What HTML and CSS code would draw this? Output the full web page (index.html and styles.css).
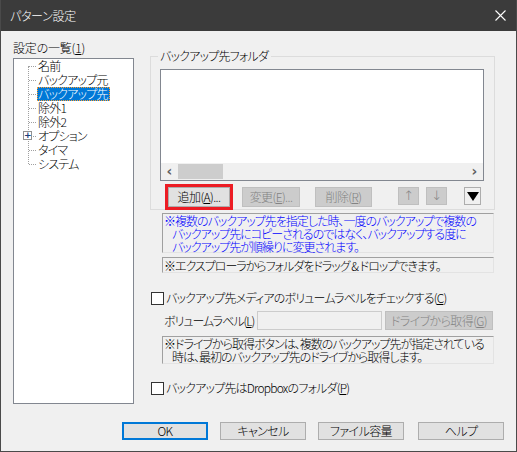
FILE: index.html
```html
<!DOCTYPE html>
<html lang="ja">
<head>
<meta charset="utf-8">
<title>パターン設定</title>
<link rel="stylesheet" href="styles.css">
</head>
<body>
<div class="window">
  <div class="titlebar">
    <span class="title">パターン設定</span>
    <svg class="close" width="11" height="11" viewBox="0 0 11 11"><path d="M0.5 0.5 L10.5 10.5 M10.5 0.5 L0.5 10.5" stroke="#ffffff" stroke-width="1.1" fill="none"/></svg>
  </div>
  <div class="body">
    <div class="main">
      <div class="left">
        <div class="lbl">設定の一覧(<u>1</u>)</div>
        <div class="tree">
          <ul class="nodes">
            <li>名前</li>
            <li>バックアップ元</li>
            <li><span class="sel">バックアップ先</span></li>
            <li>除外1</li>
            <li>除外2</li>
            <li class="has-kids"><span class="plus">+</span>オプション</li>
            <li>タイマ</li>
            <li>システム</li>
          </ul>
        </div>
      </div>
      <div class="right">
        <div class="group">
          <div class="legend">バックアップ先フォルダ</div>
          <div class="listview">
            <div class="lv-area"></div>
            <div class="hscroll">
              <span class="arr">&lsaquo;</span>
              <span class="thumb"></span>
              <span class="track"></span>
              <span class="arr">&rsaquo;</span>
            </div>
          </div>
          <div class="btnrow">
            <button class="btn b-add focus-red">追加(<u>A</u>)...</button>
            <button class="btn dis b-chg">変更(<u>E</u>)...</button>
            <button class="btn dis b-del">削除(<u>R</u>)</button>
            <button class="btn dis b-up">↑</button>
            <button class="btn dis b-down">↓</button>
            <button class="btn b-menu"><svg width="12" height="9" viewBox="0 0 12 9"><path d="M0 0 H12 L6 9 Z" fill="#000"/></svg></button>
          </div>
        </div>
        <div class="note blue">
          <div class="ln">※複数のバックアップ先を指定した時、一度のバックアップで複数の</div>
          <div class="ln ind">バックアップ先にコピーされるのではなく、バックアップする度に</div>
          <div class="ln ind">バックアップ先が順繰りに変更されます。</div>
        </div>
        <div class="note single"><div class="ln">※エクスプローラからフォルダをドラッグ &amp; ドロップできます。</div></div>
        <label class="chk chk1"><span class="box"></span>バックアップ先メディアのボリュームラベルをチェックする(<u>C</u>)</label>
        <div class="volrow">
          <span class="vlbl">ボリュームラベル(<u>L</u>)</span>
          <span class="input"></span>
          <button class="btn dis b-drive">ドライブから取得(<u>G</u>)</button>
        </div>
        <div class="note two">
          <div class="ln">※ドライブから取得ボタンは、複数のバックアップ先が指定されている</div>
          <div class="ln ind">時は、最初のバックアップ先のドライブから取得します。</div>
        </div>
        <label class="chk chk2"><span class="box"></span>バックアップ先はDropboxのフォルダ(<u>P</u>)</label>
      </div>
    </div>
    <div class="footer">
      <button class="btn fbtn ok">OK</button>
      <button class="btn fbtn">キャンセル</button>
      <button class="btn fbtn">ファイル容量</button>
      <button class="btn fbtn help">ヘルプ</button>
    </div>
  </div>
</div>
</body>
</html>
```

FILE: styles.css
```css
* { box-sizing: border-box; }
html, body { margin: 0; padding: 0; }
body {
  width: 517px; height: 452px; overflow: hidden;
  font-family: "Noto Sans CJK JP", "Liberation Sans", sans-serif;
  font-size: 12px;
  font-weight: 300;
  letter-spacing: -0.8px;
  font-feature-settings: "palt";
  color: #000;
  background: #f0f0f0;
}
u { text-decoration: underline; text-underline-offset: 1px; }
.window {
  width: 517px; height: 452px;
  border: 1px solid #4a4a4a;
  border-top: 0;
  display: flex; flex-direction: column;
  background: #f0f0f0;
}
.titlebar {
  height: 31px; flex: none;
  background: #3b3b3b;
  color: #fff;
  display: flex; align-items: center; justify-content: space-between;
  padding: 0 10px 0 9px;
}
.title { font-size: 12px; line-height: 14px; letter-spacing: -0.3px; }
.close { display: block; }
.body { flex: 1; display: flex; flex-direction: column; }
.main { display: flex; height: 373px; }
.left { width: 133px; padding-left: 12px; padding-top: 9px; flex: none; }
.lbl { height: 16px; line-height: 16px; margin-bottom: 2px; letter-spacing: -0.2px; }
.tree {
  width: 121px; height: 346px;
  background: #fff; border: 1px solid #828790;
}
.nodes {
  list-style: none; margin: 0; padding: 0;
  position: relative;
}
.nodes::before {
  content: ""; position: absolute;
  left: 14px; top: 7px; height: 98px;
  border-left: 1px dotted #a0a0a0;
}
.nodes li {
  position: relative;
  height: 14px; line-height: 14px;
  padding-left: 24px;
  white-space: nowrap;
}
.nodes li::before {
  content: ""; position: absolute;
  left: 15px; top: 7px; width: 7px;
  border-top: 1px dotted #a0a0a0;
}
.sel {
  display: inline-block;
  margin-left: -1px; padding: 0 2px 0 1px;
  height: 14px;
  background: #0078d7; color: #fff;
  outline: 1px dotted #ff9d2e; outline-offset: -1px;
}
.plus {
  position: absolute; left: 9px; top: 2px;
  width: 9px; height: 9px;
  border: 1px solid #919191; background: #fff;
  font-size: 9px; line-height: 7px; text-align: center; letter-spacing: 0;
  color: #1a3e7a; font-family: "DejaVu Sans", sans-serif; font-weight: bold;
  z-index: 1;
}
.right { width: 366px; padding-left: 16px; padding-top: 25px; }
.group {
  width: 345px; height: 154px;
  border: 1px solid #dcdcdc;
  padding: 0 9px 0 9px;
}
.legend {
  display: block; width: fit-content;
  margin: -8px 0 0 -2px; padding: 0 3px 0 2px;
  height: 14px; line-height: 14px;
  background: #f0f0f0;
}
.listview {
  margin-top: 6px;
  width: 324px; height: 112px;
  border: 1px solid #828790;
  background: #fff;
  display: flex; flex-direction: column;
}
.lv-area { flex: 1; }
.hscroll {
  height: 17px; background: #f0f0f0;
  display: flex; align-items: center;
}
.arr {
  width: 17px; text-align: center; color: #606060; letter-spacing: 0;
  font-family: "DejaVu Sans", sans-serif; font-weight: bold; font-size: 14px; line-height: 17px;
}
.thumb { width: 45px; height: 15px; background: #cdcdcd; }
.track { flex: 1; }
.btnrow { display: flex; align-items: flex-start; margin-top: 6px; height: 20px; }
.btn {
  font: inherit; font-feature-settings: "palt"; letter-spacing: -0.6px;
  margin: 0; padding: 0;
  background: #e1e1e1; border: 1px solid #adadad; color: #000;
  height: 20px; line-height: 16px;
}
.btn.dis { background: #cccccc; border-color: #bfbfbf; color: #838383; }
.b-add { margin-left: 8px; width: 62px; }
.focus-red { outline: 3px solid #ec1c24; outline-offset: 0; }
.b-chg { margin-left: 12px; width: 58px; }
.b-del { margin-left: 15px; width: 57px; }
.b-up { margin-left: 26px; width: 21px; height: 18px; font-family: "DejaVu Sans", sans-serif; font-size: 13px; }
.b-down { margin-left: 7px; width: 21px; height: 18px; font-family: "DejaVu Sans", sans-serif; font-size: 13px; }
.b-menu { margin-left: 17px; width: 17px; height: 18px; background: #f0f0f0; display: flex; align-items: center; justify-content: center; }
.b-menu svg { display: block; }
.note {
  margin-left: 12px; width: 332px;
  border-top: 1px solid #a0a0a0; border-left: 1px solid #a0a0a0;
  border-right: 1px solid #e3e3e3; border-bottom: 1px solid #e3e3e3;
  padding-left: 1px;
  white-space: nowrap;
  letter-spacing: -1px;
}
.ln { height: 13px; line-height: 13px; overflow: visible; }
.ind { padding-left: 8px; }
.note.blue { margin-top: 3px; height: 40px; color: #0000ff; padding-top: 0; }
.note.single { margin-top: 4px; height: 16px; padding-top: 1px; }
.note.two { margin-top: 6px; height: 28px; padding-top: 0; }
.chk { display: flex; align-items: center; height: 14px; line-height: 14px; white-space: nowrap; }
.box {
  width: 13px; height: 13px; flex: none;
  border: 1px solid #333; background: #fff; margin-right: 2px;
}
.chk1 { margin-top: 18px; margin-left: 1px; }
.chk2 { margin-top: 17px; margin-left: 1px; }
.volrow { display: flex; align-items: center; margin-top: 6px; height: 19px; }
.vlbl { margin-left: 14px; width: 93px; white-space: nowrap; letter-spacing: -1px; }
.input { width: 125px; height: 19px; border: 1px solid #cccccc; background: #f0f0f0; }
.b-drive { margin-left: 3px; width: 108px; height: 19px; }
.footer {
  display: flex; justify-content: flex-end; gap: 12px;
  margin-top: 18px; padding-right: 12px;
}
.fbtn { width: 86px; height: 18px; line-height: 14px; }
.ok { border: 2px solid #0078d7; }
.help { margin-left: 2px; }
```
